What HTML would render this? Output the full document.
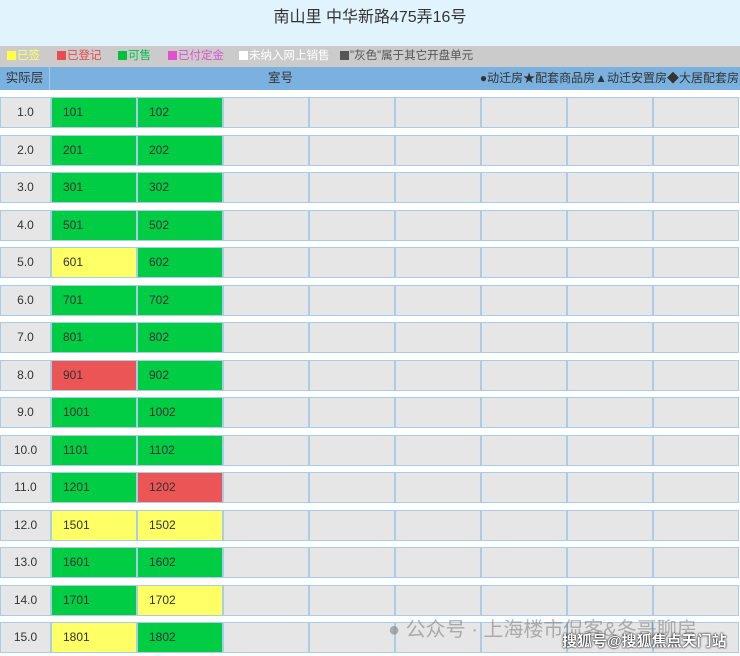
<!DOCTYPE html>
<html><head><meta charset="utf-8"><style>
*{margin:0;padding:0;box-sizing:border-box}
body{width:740px;height:656px;overflow:hidden;background:#fff;font-family:"Liberation Sans","Noto Sans CJK SC",sans-serif;position:relative}
.title{position:absolute;left:0;top:0;width:740px;height:46px;background:#e1f3fc;text-align:center;line-height:36px;font-size:16px;color:#333}
.leg{position:absolute;left:0;top:46px;width:740px;height:21px;background:#cbcbcb;font-size:11.5px;line-height:21px;white-space:nowrap}
.leg span{position:absolute;top:0}
.leg i{display:inline-block;width:9px;height:9px;vertical-align:-1px;margin-right:1px}
.hdr{position:absolute;left:0;top:67px;width:740px;height:23px;background:#7ab1df;font-size:12.5px;line-height:23px;color:#333}
.hdr .f{position:absolute;left:0;width:50px;text-align:center;border-right:1px solid #a8cbe8;height:23px}
.hdr .m{position:absolute;left:268px}
.hdr .r{position:absolute;right:1px;font-size:12px}
.row{position:absolute;left:0;height:31px;display:flex}
.row div{height:31px;border:1px solid #a9cde8;background:#e6e6e6;font-size:12px;line-height:29px;color:#333}
.row .fl{width:51px;text-align:center}
.row .c{width:86px;padding-left:11px}
.g{background:#00cc44!important}
.y{background:#ffff66!important}
.rd{background:#ec5555!important}
.wm{position:absolute;left:388px;top:613px;font-size:20px;color:rgba(120,120,120,.55);white-space:nowrap}
.wm2{position:absolute;left:562px;top:630px;font-size:15px;color:#fff;font-weight:bold;text-shadow:0 0 2px #000,0 0 1px #000;white-space:nowrap}
</style></head><body>
<div class="title">南山里 中华新路475弄16号</div>
<div class="leg"><span style="left:7px;color:#ffff66"><i style="background:#ffff44"></i>已签</span><span style="left:57px;color:#e84c4c"><i style="background:#e84c4c"></i>已登记</span><span style="left:118px;color:#00c040"><i style="background:#00c040"></i>可售</span><span style="left:168px;color:#e050d0"><i style="background:#e050d0"></i>已付定金</span><span style="left:239px;color:#fff"><i style="background:#fff"></i>未纳入网上销售</span><span style="left:340px;color:#555"><i style="background:#555"></i>"灰色"属于其它开盘单元</span></div>
<div class="hdr"><div class="f">实际层</div><div class="m">室号</div><div class="r">●动迁房★配套商品房▲动迁安置房◆大居配套房</div></div>

<div class="row" style="top:97px"><div class="fl">1.0</div><div class="c g">101</div><div class="c g">102</div><div class="c"></div><div class="c"></div><div class="c"></div><div class="c"></div><div class="c"></div><div class="c"></div></div>
<div class="row" style="top:134.5px"><div class="fl">2.0</div><div class="c g">201</div><div class="c g">202</div><div class="c"></div><div class="c"></div><div class="c"></div><div class="c"></div><div class="c"></div><div class="c"></div></div>
<div class="row" style="top:172px"><div class="fl">3.0</div><div class="c g">301</div><div class="c g">302</div><div class="c"></div><div class="c"></div><div class="c"></div><div class="c"></div><div class="c"></div><div class="c"></div></div>
<div class="row" style="top:209.5px"><div class="fl">4.0</div><div class="c g">501</div><div class="c g">502</div><div class="c"></div><div class="c"></div><div class="c"></div><div class="c"></div><div class="c"></div><div class="c"></div></div>
<div class="row" style="top:247px"><div class="fl">5.0</div><div class="c y">601</div><div class="c g">602</div><div class="c"></div><div class="c"></div><div class="c"></div><div class="c"></div><div class="c"></div><div class="c"></div></div>
<div class="row" style="top:284.5px"><div class="fl">6.0</div><div class="c g">701</div><div class="c g">702</div><div class="c"></div><div class="c"></div><div class="c"></div><div class="c"></div><div class="c"></div><div class="c"></div></div>
<div class="row" style="top:322px"><div class="fl">7.0</div><div class="c g">801</div><div class="c g">802</div><div class="c"></div><div class="c"></div><div class="c"></div><div class="c"></div><div class="c"></div><div class="c"></div></div>
<div class="row" style="top:359.5px"><div class="fl">8.0</div><div class="c rd">901</div><div class="c g">902</div><div class="c"></div><div class="c"></div><div class="c"></div><div class="c"></div><div class="c"></div><div class="c"></div></div>
<div class="row" style="top:397px"><div class="fl">9.0</div><div class="c g">1001</div><div class="c g">1002</div><div class="c"></div><div class="c"></div><div class="c"></div><div class="c"></div><div class="c"></div><div class="c"></div></div>
<div class="row" style="top:434.5px"><div class="fl">10.0</div><div class="c g">1101</div><div class="c g">1102</div><div class="c"></div><div class="c"></div><div class="c"></div><div class="c"></div><div class="c"></div><div class="c"></div></div>
<div class="row" style="top:472px"><div class="fl">11.0</div><div class="c g">1201</div><div class="c rd">1202</div><div class="c"></div><div class="c"></div><div class="c"></div><div class="c"></div><div class="c"></div><div class="c"></div></div>
<div class="row" style="top:509.5px"><div class="fl">12.0</div><div class="c y">1501</div><div class="c y">1502</div><div class="c"></div><div class="c"></div><div class="c"></div><div class="c"></div><div class="c"></div><div class="c"></div></div>
<div class="row" style="top:547px"><div class="fl">13.0</div><div class="c g">1601</div><div class="c g">1602</div><div class="c"></div><div class="c"></div><div class="c"></div><div class="c"></div><div class="c"></div><div class="c"></div></div>
<div class="row" style="top:584.5px"><div class="fl">14.0</div><div class="c g">1701</div><div class="c y">1702</div><div class="c"></div><div class="c"></div><div class="c"></div><div class="c"></div><div class="c"></div><div class="c"></div></div>
<div class="row" style="top:622px"><div class="fl">15.0</div><div class="c y">1801</div><div class="c g">1802</div><div class="c"></div><div class="c"></div><div class="c"></div><div class="c"></div><div class="c"></div><div class="c"></div></div>

<div class="wm">● 公众号 · 上海楼市侃客&amp;冬哥聊房</div>
<div class="wm2">搜狐号@搜狐焦点天门站</div>
</body></html>
